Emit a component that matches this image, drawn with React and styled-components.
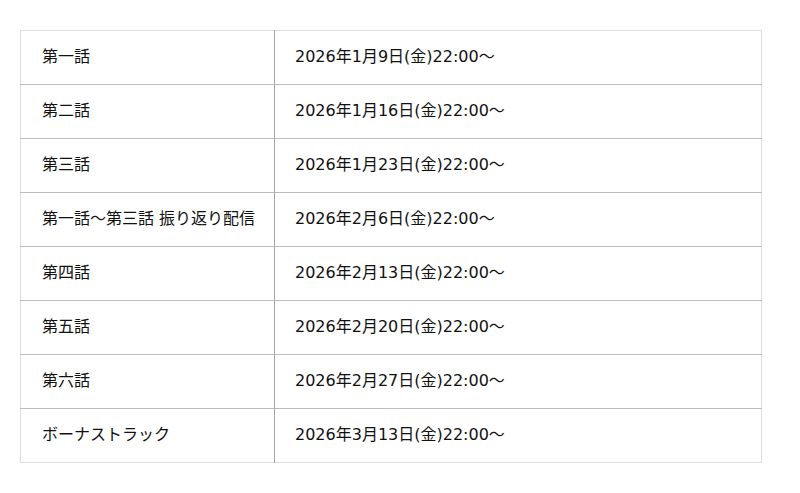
import styled, { createGlobalStyle } from "styled-components";

const GlobalStyle = createGlobalStyle`
  body {
    margin: 0;
    background: #fff;
    font-family: "DejaVu Sans", "Noto Sans CJK JP", sans-serif;
    color: #111;
  }
`;

const episodes = [
  { title: "第一話", date: "2026年1月9日(金)22:00〜" },
  { title: "第二話", date: "2026年1月16日(金)22:00〜" },
  { title: "第三話", date: "2026年1月23日(金)22:00〜" },
  { title: "第一話〜第三話 振り返り配信", date: "2026年2月6日(金)22:00〜" },
  { title: "第四話", date: "2026年2月13日(金)22:00〜" },
  { title: "第五話", date: "2026年2月20日(金)22:00〜" },
  { title: "第六話", date: "2026年2月27日(金)22:00〜" },
  { title: "ボーナストラック", date: "2026年3月13日(金)22:00〜" },
];

const App = () => {
  return (
    <Page>
      <GlobalStyle />
      <Schedule>
        <colgroup>
          <col style={{ width: 254 }} />
          <col />
        </colgroup>
        <tbody>
          {episodes.map((ep) => (
            <Row key={ep.title}>
              <TitleCell>{ep.title}</TitleCell>
              <DateCell>{ep.date}</DateCell>
            </Row>
          ))}
        </tbody>
      </Schedule>
    </Page>
  );
};

export default App;

const Page = styled.div`
  padding: 30px 0 0 20px;
`;

const Schedule = styled.table`
  width: 742px;
  table-layout: fixed;
  border-collapse: collapse;
  border: 1px solid #dcdcdc;
  font-size: 16px;
`;

const Row = styled.tr`
  height: 54px;
  & + & td {
    border-top: 1px solid #bdbdbd;
  }
`;

const TitleCell = styled.td`
  padding: 0 0 5px 21px;
  border-right: 1px solid #a8a8a8;
  white-space: nowrap;
`;

const DateCell = styled.td`
  padding: 0 0 5px 20px;
`;
